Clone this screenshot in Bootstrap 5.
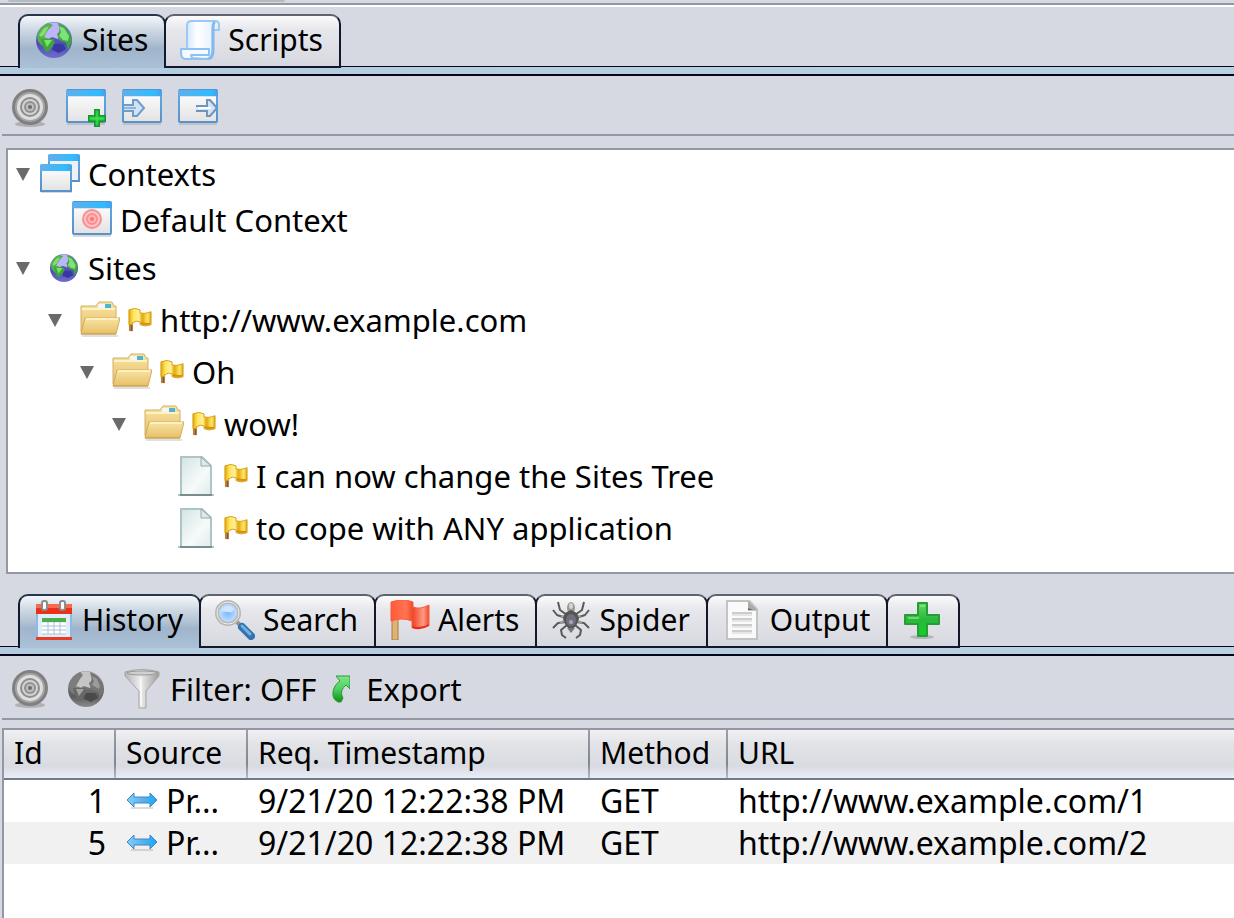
<!DOCTYPE html>
<html lang="en">
<head>
<meta charset="utf-8">
<meta name="viewport" content="width=device-width, initial-scale=1">
<title>Sites and History</title>
<link href="https://cdn.jsdelivr.net/npm/bootstrap@5.3.0/dist/css/bootstrap.min.css" rel="stylesheet">
<style>
  body { background: #d6d9e1; color: #000; font-family: "Noto Sans", sans-serif; font-size: 31px; line-height: 42px; }
  button { color: #000; }
  .splitter { height: 7px; border-bottom: 2px solid #fff; background: linear-gradient(#d6d9e1 3px, #9297a1 3px); }
  .splitter span { display: block; width: 277px; height: 2px; margin-left: 8px; background: #b4bcc0; border-radius: 0 0 3px 3px; }

  /* tab strips */
  .tab-strip { padding-left: 18px; }
  .tab-strip.first { margin-top: 7px; }
  .tab-strip.second { margin-top: 20px; }
  .tool-tab { height: 54px; margin: 0 0 -2px -2px; padding: 0 16px 2px 14px; gap: 8px; position: relative; white-space: nowrap; font-size: 30px;
    border: 2px solid #14172a; border-top-color: #60646f; border-radius: 10px 10px 0 0;
    background: linear-gradient(#fbfbfc, #e6e7eb 28%, #dfe0e6 65%, #d5d8df); }
  .tool-tab:first-child { margin-left: 0; }
  .tool-tab.on { border-color: #101a30; border-top-color: #23384d; border-bottom: 0; padding-bottom: 4px; z-index: 1;
    background: linear-gradient(#f4f7fa, #ccd7e2 28%, #b4c5d5 48%, #a0b5cb 62%, #abc1d7); }
  .tab-line { height: 10px; border-top: 1px solid #05061a; border-bottom: 2px solid #05061a; background: linear-gradient(90deg, #b3cbdf, #b9d1e0); }

  /* toolbars */
  .tool-row { margin-left: 2px; padding-left: 8px; border-bottom: 2px solid #9297a4; gap: 16px; }
  .tool-row.short { height: 60px; padding-top: 6px; }
  .tool-row.tall { height: 64px; padding-top: 4px; }
  .flat { border: 0; padding: 0; background: none; display: flex; align-items: center; }

  /* sites tree */
  .tree-box { margin: 12px 0 0 6px; padding: 1px 0 17px 8px; border: 2px solid #9297a4; border-right: 0; background: #fff; }
  .tree-box ul { list-style: none; margin: 0; padding: 0; }
  .tree-box ul ul { padding-left: 32px; }
  .node { height: 52px; padding-bottom: 2px; display: flex; align-items: center; gap: 8px; white-space: nowrap; }
  .node.context { height: 48px; }
  .node.context-leaf { height: 44px; }
  .twist { width: 14px; margin-right: 10px; flex: none; }
  .context .twist, .context-leaf .twist { margin-right: 2px; }
  .twist::before { content: ""; border: 7px solid transparent; border-top: 13px solid #6a6a6a; border-bottom: 0; }
  .twist.leaf::before { visibility: hidden; }

  /* history table */
  .history-box { margin: 8px 0 0 2px; border: 2px solid #9297a4; border-width: 2px 0 0 2px; background: #fff; }
  .history { table-layout: fixed; width: 100%; border-collapse: separate; border-spacing: 0; white-space: nowrap; }
  .history th { height: 50px; padding: 0 10px 2px; font-size: 30px; font-weight: 400; border-bottom: 2px solid #737a87;
    background: linear-gradient(#9b9ea8, #81858f 70%, #b9bdc8) right / 2px 100% no-repeat,
      linear-gradient(#f1f1f4, #e2e3e7 30%, #d8dbe1 75%, #e9edf7); }
  .history th:last-child { background: linear-gradient(#f1f1f4, #e2e3e7 30%, #d8dbe1 75%, #e9edf7); }
  .history td { height: 42px; padding: 0 10px; overflow: hidden; font-size: 32px; }
  .history tbody tr:nth-child(even) td { background: #f1f1f1; }
  .c-id { width: 112px; } .c-source { width: 132px; } .c-time { width: 342px; } .c-method { width: 138px; }
  svg { flex: none; display: block; }
</style>
<script src="https://cdn.jsdelivr.net/npm/bootstrap@5.3.0/dist/js/bootstrap.bundle.min.js"></script>
</head>
<body class="d-flex flex-column min-vh-100">

<svg width="0" height="0" class="position-absolute" aria-hidden="true">
  <defs>
    <linearGradient id="gBar"><stop offset="0" stop-color="#63aeea"/><stop offset=".8" stop-color="#2fbcff"/><stop offset="1" stop-color="#4a9ee6"/></linearGradient>
    <linearGradient id="gWin" x2="0" y2="1"><stop offset="0" stop-color="#fff"/><stop offset="1" stop-color="#e2e2e2"/></linearGradient>
    <linearGradient id="gEdge" x2="0" y2="1"><stop offset="0" stop-color="#5fa9e6"/><stop offset="1" stop-color="#5a92c8"/></linearGradient>
    <linearGradient id="gSea" x2="0" y2="1"><stop offset="0" stop-color="#8b84e0"/><stop offset=".6" stop-color="#4d4bb4"/><stop offset="1" stop-color="#6f6fca"/></linearGradient>
    <linearGradient id="gGreyBall" x2="0" y2="1"><stop offset="0" stop-color="#a9a9a9"/><stop offset=".7" stop-color="#5a5a5a"/><stop offset="1" stop-color="#8c8c8c"/></linearGradient>
    <linearGradient id="gFolder" x2="0" y2="1"><stop offset="0" stop-color="#f8e3a4"/><stop offset="1" stop-color="#e8c067"/></linearGradient>
    <linearGradient id="gPage" x2="1" y2="1"><stop offset="0" stop-color="#d2e4e4"/><stop offset=".6" stop-color="#f6fafa"/><stop offset="1" stop-color="#dfecec"/></linearGradient>
    <linearGradient id="gGold"><stop offset="0" stop-color="#e3a90c"/><stop offset=".2" stop-color="#ffe45c"/><stop offset=".45" stop-color="#fff09a"/><stop offset=".6" stop-color="#e0aa08"/><stop offset=".85" stop-color="#ffe768"/><stop offset="1" stop-color="#dfa414"/></linearGradient>
    <linearGradient id="gRed"><stop offset="0" stop-color="#ff5a38"/><stop offset=".4" stop-color="#ff7454"/><stop offset=".58" stop-color="#f0482a"/><stop offset=".85" stop-color="#ff9a80"/><stop offset="1" stop-color="#ee4b2e"/></linearGradient>
    <linearGradient id="gPlus" x2="0" y2="1"><stop offset="0" stop-color="#5fdb62"/><stop offset=".5" stop-color="#2bb83c"/><stop offset="1" stop-color="#0fd21f"/></linearGradient>
    <linearGradient id="gFunnel"><stop offset="0" stop-color="#b4b4b4"/><stop offset=".45" stop-color="#eee"/><stop offset="1" stop-color="#9c9c9c"/></linearGradient>
    <linearGradient id="gSwap"><stop offset="0" stop-color="#7fcfff"/><stop offset=".5" stop-color="#5fb2ee"/><stop offset="1" stop-color="#1aa8f8"/></linearGradient>
    <linearGradient id="gArrow" x2="0" y2="1"><stop offset="0" stop-color="#7fe58b"/><stop offset=".5" stop-color="#4fd060"/><stop offset="1" stop-color="#0f8f17"/></linearGradient>
    <radialGradient id="gLens"><stop offset="0" stop-color="#7fb4ff"/><stop offset=".7" stop-color="#b5d8ff"/><stop offset="1" stop-color="#dceeff"/></radialGradient>
    <linearGradient id="gRoll"><stop offset="0" stop-color="#cfe5fb"/><stop offset=".4" stop-color="#fff"/><stop offset="1" stop-color="#e4f1fd"/></linearGradient>

    <symbol id="globe" viewBox="0 0 36 36">
      <circle cx="18" cy="18" r="18" fill="url(#gSea)"/>
      <path d="M10 3Q18-2 26 3L23 9l3 4-4 4-6-2-5 3-6-2 1-8z" fill="#bcb5f6"/>
      <path d="M12 1Q3 5 1 14l1 5 4 5 3-4 5-3-6-2 4-7 5-5z" fill="#53b24c"/>
      <path d="M3 13l5-7 5-2-4 8-4 3z" fill="#84dc72"/>
      <path d="M5 17l12 0 2 4-6 8-3 1-4-7z" fill="#3ea43b"/><path d="M8 18h8l-5 7z" fill="#73e55f"/>
      <path d="M22 1l6 3q7 6 8 15l-4 9-2-7-7-3-2-6 3-3z" fill="#40a443"/>
      <path d="M23 4l5 2 5 8-1 5-5-1-4-4 2-4z" fill="#7fe179"/>
      <path d="M18 22h9l3 5-7 4-7-3z" fill="#3a37a5"/>
    </symbol>
    <symbol id="globe-grey" viewBox="0 0 36 36">
      <circle cx="18" cy="18" r="18" fill="url(#gGreyBall)"/>
      <path d="M10 3Q18-2 26 3L23 9l3 4-4 4-6-2-5 3-6-2 1-8z" fill="#c5c5c5"/>
      <path d="M12 1Q3 5 1 14l1 5 4 5 3-4 5-3-6-2 4-7 3-4z" fill="#7d7d7d"/>
      <path d="M5 17l12 0 2 4-6 8-3 1-4-7z" fill="#686868"/><path d="M8 18h8l-5 7z" fill="#a3a3a3"/>
      <path d="M22 1l6 3q7 6 8 15l-4 9-2-7-7-3-2-6 3-3z" fill="#757575"/>
      <path d="M24 5l5 3 3 7-1 3-7-4 2-4z" fill="#9b9b9b"/>
      <path d="M18 22h9l3 5-7 4-7-3z" fill="#494949"/>
    </symbol>
    <symbol id="target" viewBox="0 0 40 40">
      <ellipse cx="20" cy="36" rx="15" ry="3" fill="#aeb0b5"/>
      <circle cx="20" cy="19" r="18" fill="#808080"/><circle cx="20" cy="19" r="15" fill="#a5a5a5"/>
      <circle cx="20" cy="19" r="13" fill="#dedede"/><circle cx="20" cy="19" r="10" fill="#8d8d8d"/>
      <circle cx="20" cy="19" r="8" fill="#d3d3d3"/><circle cx="20" cy="19" r="6" fill="#919191"/>
      <circle cx="20" cy="19" r="4" fill="#bdbdbd"/><circle cx="20" cy="19" r="2" fill="#6d6d6d"/>
    </symbol>
    <symbol id="win" viewBox="0 0 40 40">
      <path d="M1 35h38v2H1z" fill="#8f969f" opacity=".35"/>
      <rect x="1" y="3" width="38" height="31" rx="1" fill="url(#gWin)" stroke="url(#gEdge)" stroke-width="2"/>
      <path d="M0 3q0-2 2-2h36q2 0 2 2v5H0z" fill="url(#gBar)"/><path d="M1 1h38v1H1z" fill="#4a97dc"/><path d="M2 8h36v1H2z" fill="#d3e5f5"/>
    </symbol>
    <symbol id="win-add" viewBox="0 0 40 40">
      <use href="#win" width="40" height="40"/>
      <path d="M28 21h6v6h6v7h-6v5h-6v-5h-6v-7h6z" fill="#1c9434"/><path d="M30 23h2v6h6v3h-6v5h-2v-5h-6v-3h6z" fill="#33e348" stroke="#2bc43e"/>
    </symbol>
    <symbol id="win-in" viewBox="0 0 40 40">
      <use href="#win" width="40" height="40"/>
      <path d="M2 17h9v-5h4l7 8-7 8h-4v-5H2" fill="#cfe4f6" stroke="#6f9cc9" stroke-width="2"/><path d="M2 20h12" stroke="#91b4d4" stroke-width="2"/>
    </symbol>
    <symbol id="win-out" viewBox="0 0 40 40">
      <use href="#win" width="40" height="40"/>
      <path d="M18 18h11v-6h3l7 8-7 8h-3v-5H18" fill="#cfe4f6" stroke="#6f95bd" stroke-width="2"/><path d="M20 20h13" stroke="#fff" stroke-width="2"/>
    </symbol>
    <symbol id="wins" viewBox="0 0 40 40">
      <rect x="9" y="2" width="30" height="25" fill="#edf1f5" stroke="url(#gEdge)" stroke-width="2"/><path d="M8 2q0-2 2-2h28q2 0 2 2v5H8z" fill="url(#gBar)"/>
      <rect x="1" y="12" width="30" height="25" fill="url(#gWin)" stroke="url(#gEdge)" stroke-width="2"/><path d="M0 12q0-2 2-2h28q2 0 2 2v5H0z" fill="url(#gBar)"/>
      <path d="M1 38h31v1H1z" fill="#d5d9de"/>
    </symbol>
    <symbol id="win-target" viewBox="0 0 40 40">
      <use href="#win" width="40" height="40"/>
      <circle cx="20" cy="19" r="10" fill="#fb8f8f"/><circle cx="20" cy="19" r="7" fill="none" stroke="#ffc3c3" stroke-width="2"/><circle cx="20" cy="19" r="3" fill="#ff7070" stroke="#ffb5b5" stroke-width="2"/>
    </symbol>
    <symbol id="folder" viewBox="0 0 40 40">
      <path d="M2 35h36v2H2z" fill="#ccc" opacity=".6"/>
      <path d="M1 6h15l3-4h13l2 4h2v26H1z" fill="url(#gFolder)" stroke="#d3b068" stroke-width="1"/>
      <path d="M18 4h13v4H18z" fill="#f5f7f2"/><path d="M25 4h6v4h-6z" fill="#4db5d3"/>
      <path d="M2 9h33" stroke="#fff3c6" stroke-width="2"/>
      <path d="M5 18h35l-4 16H1z" fill="url(#gFolder)" stroke="#d3ab5e" stroke-width="1"/><path d="M6 19h32" stroke="#fff1bd" stroke-width="2"/>
      <path d="M1 34h35" stroke="#c29d50" stroke-width="1"/>
    </symbol>
    <symbol id="flag-gold" viewBox="0 0 26 26">
      <path d="M1 3h4v22H1z" fill="#b98445"/><path d="M3 3h2v22H3z" fill="#8f5a2b"/>
      <path d="M1 2q7-3 12 0v3q4 2 12-1v14q-6 3-12 0v-3q-4-2-8 1v2H1z" fill="url(#gGold)" stroke="#d89b12" stroke-width="1"/>
      <path d="M14 16q5 2 10 1" stroke="#d88d16" stroke-width="2" fill="none"/>
    </symbol>
    <symbol id="sheet" viewBox="0 0 40 40">
      <path d="M2 38h36v2H2z" fill="#bac6c6"/>
      <path d="M5 1h21l9 9v29H5z" fill="url(#gPage)" stroke="#afc4c5" stroke-width="2"/>
      <path d="M25 1v9h10z" fill="#dfe9e9" stroke="#95a9aa" stroke-width="1"/><path d="M4 39h32" stroke="#788d8e" stroke-width="2"/>
    </symbol>
    <symbol id="scroll" viewBox="0 0 40 40">
      <path d="M6 5q0-4 4-4h24q-3 2-3 6v24q0 7-6 7H9z" fill="url(#gRoll)"/>
      <path d="M7 29V6q0-5 4-5h24q4 0 4 4v5h-5" fill="none" stroke="#9ccaf6" stroke-width="2"/>
      <path d="M35 2q-2 1-2 6v22q0 8-5 9" fill="none" stroke="#7fbaf1" stroke-width="3"/>
      <path d="M1 29h28v6H11l1 3q14 1 16 1H6q-5 0-5-6z" fill="#f4faff" stroke="#8dc0f3" stroke-width="2" stroke-linejoin="round"/>
    </symbol>
    <symbol id="calendar" viewBox="0 0 36 40">
      <path d="M0 5h36v35H0z" fill="#8db9e5"/><path d="M2 13h32v24H2z" fill="#e1eefa"/>
      <path d="M0 4h36v10H0z" fill="#e8331a"/><path d="M0 4h36v4H0z" fill="#f96a4d"/><path d="M0 37h36v3H0z" fill="#e93b21"/>
      <path d="M6 18h24v4H6z" fill="#4cae4b"/><path d="M6 23h24v11H6z" fill="#fff"/>
      <path d="M12 22v12M18 22v12M24 22v12M6 26h24M6 30h24M6 34h24" stroke="#a9c1d9" stroke-width="1"/>
      <rect x="6" y="1" width="5" height="9" rx="2" fill="#fff" stroke="#8c8c8c" stroke-width="2"/><rect x="24" y="1" width="5" height="9" rx="2" fill="#fff" stroke="#8c8c8c" stroke-width="2"/>
    </symbol>
    <symbol id="lens" viewBox="0 0 40 40">
      <path d="M22 22l6 6" stroke="#929292" stroke-width="4"/>
      <path d="M27 27l9 9" stroke="#3473ad" stroke-width="8" stroke-linecap="round"/><path d="M27 26l8 8" stroke="#6fb2e4" stroke-width="3" stroke-linecap="round"/>
      <circle cx="13" cy="13" r="11" fill="url(#gLens)" stroke="#b6b6b6" stroke-width="4"/><circle cx="13" cy="13" r="11" fill="none" stroke="#eee" stroke-width="1"/>
      <path d="M6 12q1-6 7-6 4 0 6 3-2 4-6 3-4-1-7 0z" fill="#cfe5ff"/>
    </symbol>
    <symbol id="flag-red" viewBox="0 0 40 40">
      <path d="M2 4h6v36H2z" fill="#e0b374" stroke="#a87b42" stroke-width="1"/>
      <path d="M1 2q12-4 22 0v5q7 3 16-2v20q-9 5-17 2v-6Q12 17 1 21z" fill="url(#gRed)" stroke="#fb593a" stroke-width="1"/>
      <path d="M22 27q9 3 17-2" stroke="#e52e13" stroke-width="2" fill="none"/>
    </symbol>
    <symbol id="spider" viewBox="0 0 38 38">
      <g fill="none" stroke="#5a5a5a" stroke-width="2" stroke-linejoin="round">
        <path d="M15 14L8 9 6 1M23 14l7-5 2-8M14 17L5 14l-4-5M24 17l9-3 4-5M14 21l-8 1-5 5M24 21l8 1 5 5M15 24l-6 5 1 5 4 3M23 24l6 5-1 5-4 3"/>
      </g>
      <path d="M9 16l7-2M22 14l7 2M8 22l7-3M30 22l-7-3" stroke="#999" stroke-width="2"/>
      <ellipse cx="19" cy="7" rx="4" ry="6" fill="#999"/><ellipse cx="19" cy="5" rx="2" ry="3" fill="#d4d4cd"/>
      <path d="M13 12l6-3 6 3 2 6-3 7-5 4-5-4-3-7z" fill="#555"/><ellipse cx="19" cy="19" rx="5" ry="6" fill="#70707c"/><circle cx="19" cy="21" r="2" fill="#a6a6c2"/>
      <path d="M15 27h8l-4 5z" fill="#777"/>
    </symbol>
    <symbol id="doc" viewBox="0 0 32 40">
      <path d="M0 0h24l8 9v31H0z" fill="#c3c3c3"/><path d="M2 2h20v9h8v27H2z" fill="#fafafa"/>
      <path d="M22 1v9h9z" fill="#aaa"/><path d="M22 8l5 2h-5z" fill="#666"/>
      <path d="M6 13h20M6 19h20M6 25h20M6 31h20" stroke="#ccc" stroke-width="2"/><path d="M6 15h20M6 21h20M6 27h20M6 33h20" stroke="#e6e6e6" stroke-width="2"/>
    </symbol>
    <symbol id="plus" viewBox="0 0 36 40">
      <ellipse cx="18" cy="37" rx="12" ry="2" fill="#a9abb0" opacity=".8"/>
      <path d="M14 3h9v12h12v9H23v12h-9V24H1v-9h13z" fill="url(#gPlus)" stroke="#2a9a3a" stroke-width="2" stroke-linejoin="round"/>
      <path d="M16 6h5M4 18h11" stroke="#8df08f" stroke-width="2" opacity=".6"/>
    </symbol>
    <symbol id="funnel" viewBox="0 0 36 40">
      <path d="M1 3q17-5 34 0v4L22 22v17h-7V22L1 7z" fill="url(#gFunnel)" stroke="#a4a4a4" stroke-width="1"/>
      <ellipse cx="18" cy="4" rx="15" ry="2" fill="#d0d0d0" stroke="#989898" stroke-width="1"/><path d="M17 9v27" stroke="#fff" stroke-width="2" opacity=".6"/>
    </symbol>
    <symbol id="export" viewBox="0 0 18 28">
      <path d="M4 1h14v13l-4-4q-6 5-4 11l1 2-2 4H6Q0 24 1 17 2 10 8 6z" fill="url(#gArrow)" stroke="#289c32" stroke-width="1"/>
    </symbol>
    <symbol id="swap" viewBox="0 0 32 18">
      <path d="M5 15h22v2H5z" fill="#999" opacity=".35"/>
      <path d="M1 8l7-7v4h16V1l7 7-7 7v-4H8v4z" fill="url(#gSwap)" stroke="#3f86c6" stroke-width="1"/>
    </symbol>
  </defs>
</svg>

<div class="splitter"><span></span></div>

<section aria-label="Sites">
  <div class="tab-strip first d-flex" role="tablist">
    <button type="button" role="tab" aria-selected="true" class="tool-tab on d-flex align-items-center"><svg width="40" height="36"><use href="#globe"/></svg>Sites</button>
    <button type="button" role="tab" aria-selected="false" class="tool-tab d-flex align-items-center"><svg width="40" height="40"><use href="#scroll"/></svg>Scripts</button>
  </div>
  <div class="tab-line"></div>
  <div class="tool-row short d-flex align-items-center" role="toolbar" aria-label="Sites tools">
    <button type="button" class="flat" aria-label="Show only in scope"><svg width="40" height="40"><use href="#target"/></svg></button>
    <button type="button" class="flat" aria-label="New context"><svg width="40" height="40"><use href="#win-add"/></svg></button>
    <button type="button" class="flat" aria-label="Import context"><svg width="40" height="40"><use href="#win-in"/></svg></button>
    <button type="button" class="flat" aria-label="Export context"><svg width="40" height="40"><use href="#win-out"/></svg></button>
  </div>
  <div class="tree-box">
    <ul>
      <li>
        <div class="node context"><button type="button" class="flat twist" aria-label="Collapse"></button><svg width="40" height="40"><use href="#wins"/></svg><span>Contexts</span></div>
        <ul><li><div class="node context-leaf"><span class="flat twist leaf"></span><svg width="40" height="40"><use href="#win-target"/></svg><span>Default Context</span></div></li></ul>
      </li>
      <li>
        <div class="node"><button type="button" class="flat twist" aria-label="Collapse"></button><svg width="32" height="28"><use href="#globe"/></svg><span>Sites</span></div>
        <ul><li>
          <div class="node"><button type="button" class="flat twist" aria-label="Collapse"></button><svg width="40" height="40"><use href="#folder"/></svg><svg width="24" height="24"><use href="#flag-gold"/></svg><span>http://www.example.com</span></div>
          <ul><li>
            <div class="node"><button type="button" class="flat twist" aria-label="Collapse"></button><svg width="40" height="40"><use href="#folder"/></svg><svg width="24" height="24"><use href="#flag-gold"/></svg><span>Oh</span></div>
            <ul><li>
              <div class="node"><button type="button" class="flat twist" aria-label="Collapse"></button><svg width="40" height="40"><use href="#folder"/></svg><svg width="24" height="24"><use href="#flag-gold"/></svg><span>wow!</span></div>
              <ul>
                <li><div class="node"><span class="flat twist leaf"></span><svg width="40" height="40"><use href="#sheet"/></svg><svg width="24" height="24"><use href="#flag-gold"/></svg><span>I can now change the Sites Tree</span></div></li>
                <li><div class="node"><span class="flat twist leaf"></span><svg width="40" height="40"><use href="#sheet"/></svg><svg width="24" height="24"><use href="#flag-gold"/></svg><span>to cope with ANY application</span></div></li>
              </ul>
            </li></ul>
          </li></ul>
        </li></ul>
      </li>
    </ul>
  </div>
</section>

<section class="d-flex flex-column flex-grow-1" aria-label="History">
  <div class="tab-strip second d-flex" role="tablist">
    <button type="button" role="tab" aria-selected="true" class="tool-tab on d-flex align-items-center"><svg width="40" height="40"><use href="#calendar"/></svg>History</button>
    <button type="button" role="tab" aria-selected="false" class="tool-tab d-flex align-items-center"><svg width="40" height="40"><use href="#lens"/></svg>Search</button>
    <button type="button" role="tab" aria-selected="false" class="tool-tab d-flex align-items-center"><svg width="40" height="40"><use href="#flag-red"/></svg>Alerts</button>
    <button type="button" role="tab" aria-selected="false" class="tool-tab d-flex align-items-center"><svg width="40" height="38"><use href="#spider"/></svg>Spider</button>
    <button type="button" role="tab" aria-selected="false" class="tool-tab d-flex align-items-center"><svg width="40" height="40"><use href="#doc"/></svg>Output</button>
    <button type="button" role="tab" aria-selected="false" aria-label="Add tab" class="tool-tab d-flex align-items-center"><svg width="40" height="40"><use href="#plus"/></svg></button>
  </div>
  <div class="tab-line"></div>
  <div class="tool-row tall d-flex align-items-center" role="toolbar" aria-label="History tools">
    <button type="button" class="flat" aria-label="Show only in scope"><svg width="40" height="40"><use href="#target"/></svg></button>
    <button type="button" class="flat" aria-label="Link with sites selection"><svg width="40" height="36"><use href="#globe-grey"/></svg></button>
    <button type="button" class="flat gap-2"><svg width="40" height="40"><use href="#funnel"/></svg>Filter: OFF</button>
    <button type="button" class="flat gap-3"><svg width="18" height="28"><use href="#export"/></svg>Export</button>
  </div>
  <div class="history-box flex-grow-1">
    <table class="history">
      <colgroup><col class="c-id"><col class="c-source"><col class="c-time"><col class="c-method"><col></colgroup>
      <thead><tr><th scope="col">Id</th><th scope="col">Source</th><th scope="col">Req. Timestamp</th><th scope="col">Method</th><th scope="col">URL</th></tr></thead>
      <tbody>
        <tr><td class="text-end">1</td><td><div class="d-flex align-items-center gap-2"><svg width="32" height="18"><use href="#swap"/></svg>Pr...</div></td><td>9/21/20 12:22:38 PM</td><td>GET</td><td>http://www.example.com/1</td></tr>
        <tr><td class="text-end">5</td><td><div class="d-flex align-items-center gap-2"><svg width="32" height="18"><use href="#swap"/></svg>Pr...</div></td><td>9/21/20 12:22:38 PM</td><td>GET</td><td>http://www.example.com/2</td></tr>
      </tbody>
    </table>
  </div>
</section>
</body>
</html>
